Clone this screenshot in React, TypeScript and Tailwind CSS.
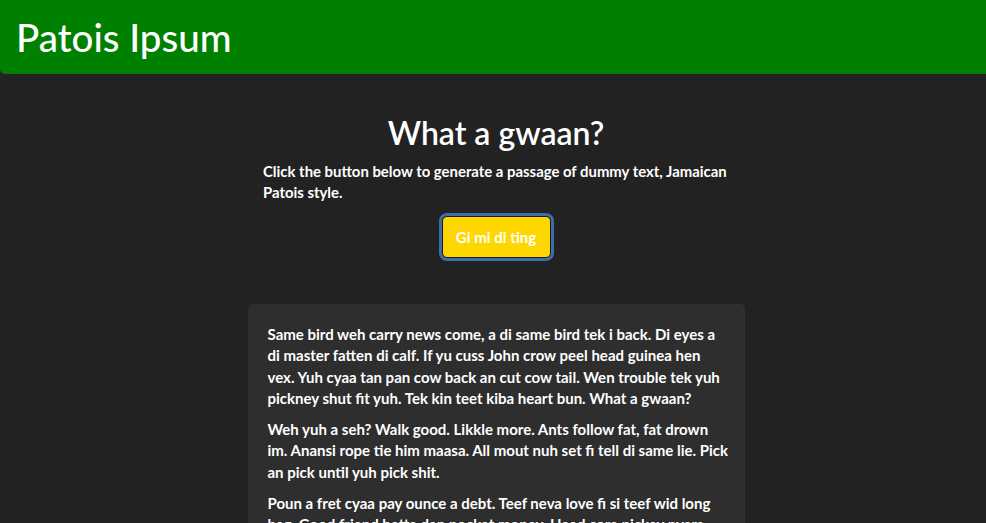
import React from 'react';

const passages = [
  "Same bird weh carry news come, a di same bird tek i back. Di eyes a di master fatten di calf. If yu cuss John crow peel head guinea hen vex. Yuh cyaa tan pan cow back an cut cow tail. Wen trouble tek yuh pickney shut fit yuh. Tek kin teet kiba heart bun. What a gwaan?",
  "Weh yuh a seh? Walk good. Likkle more. Ants follow fat, fat drown im. Anansi rope tie him maasa. All mout nuh set fi tell di same lie. Pick an pick until yuh pick shit.",
  "Poun a fret cyaa pay ounce a debt. Teef neva love fi si teef wid long bag. Good friend betta dan pocket money. Head cora pickey nyam.",
];

export default function App() {
  return (
    <div className="min-h-screen bg-[#222222] text-white font-['Lato','Liberation_Sans',sans-serif]">
      {/* Header */}
      <header className="h-[74px] bg-[#008000] rounded-bl-[5px] px-4 flex items-center">
        <h1 className="text-[38.5px] font-medium leading-none">Patois Ipsum</h1>
      </header>

      <main className="flex flex-col items-center pl-[6px]">
        <h2 className="mt-[37px] text-[32px] font-semibold leading-[44px]">What a gwaan?</h2>
        <p className="mt-[6px] w-[472px] pl-[3px] text-[14.9px] font-bold leading-[21px]">
          Click the button below to generate a passage of dummy text, Jamaican Patois style.
        </p>
        <button className="mt-[13px] h-[42px] w-[109px] rounded-[5px] bg-[#ffd700] text-[15px] font-bold text-white outline outline-[3px] outline-offset-0 outline-[#3b6ea8] border border-[#1a1a1a]">
          Gi mi di ting
        </button>

        <div className="mt-[46px] w-[497px] rounded-[5px] bg-[#2e2e2e] pl-5 pr-[14px] pt-[20px] pb-5">
          {passages.map((p, i) => (
            <p key={i} className="mb-[10px] text-[15px] font-bold leading-[21.3px]">
              {p}
            </p>
          ))}
        </div>
      </main>
    </div>
  );
}
